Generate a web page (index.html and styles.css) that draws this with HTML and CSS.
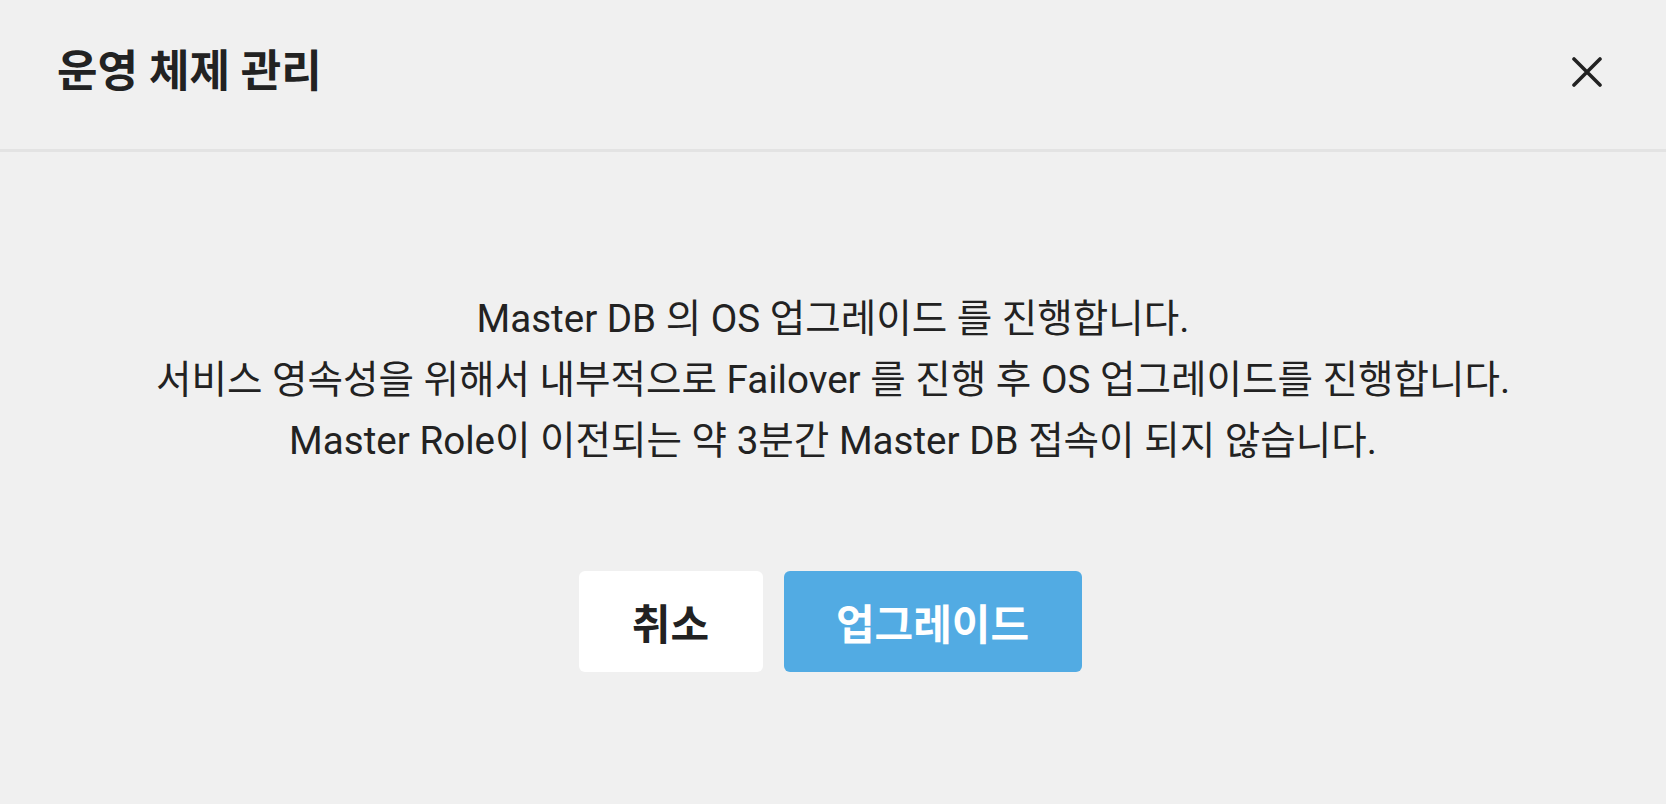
FILE: index.html
```html
<!DOCTYPE html>
<html lang="ko">
<head>
<meta charset="utf-8">
<title>운영 체제 관리</title>
<link rel="stylesheet" href="styles.css">
</head>
<body>
<div class="dialog">
  <header class="dialog-header">
    <h1 class="dialog-title">운영 체제 관리</h1>
    <button class="close-btn" type="button" aria-label="닫기">
      <svg width="30" height="30" viewBox="0 0 30 30"><path d="M2 2 L28 28 M28 2 L2 28" stroke="#222" stroke-width="3.6" stroke-linecap="round"/></svg>
    </button>
  </header>
  <main class="dialog-body">
    <p class="message">
      Master DB 의 OS 업그레이드 를 진행합니다.<br>
      서비스 영속성을 위해서 내부적으로 Failover 를 진행 후 OS 업그레이드를 진행합니다.<br>
      Master Role이 이전되는 약 3분간 Master DB 접속이 되지 않습니다.
    </p>
    <div class="actions">
      <button class="btn btn-cancel" type="button">취소</button>
      <button class="btn btn-primary" type="button">업그레이드</button>
    </div>
  </main>
</div>
</body>
</html>
```
FILE: styles.css
```css
html, body {
  margin: 0;
  padding: 0;
  background: #f0f0f0;
}

body {
  font-family: "Roboto", "Noto Sans CJK KR", sans-serif;
  color: #222;
}

.dialog {
  width: 1666px;
  height: 804px;
  display: flex;
  flex-direction: column;
}

.dialog-header {
  height: 149px;
  border-bottom: 3px solid #e3e3e3;
  display: flex;
  align-items: center;
  justify-content: space-between;
  padding: 0 64px 0 57px;
  box-sizing: content-box;
}

.dialog-title {
  margin: 0 0 14px;
  font-size: 44px;
  font-weight: 700;
  color: #222;
}

.close-btn {
  border: 0;
  background: none;
  padding: 0;
  width: 30px;
  height: 30px;
  margin-bottom: 5px;
  display: flex;
}

.dialog-body {
  display: flex;
  flex-direction: column;
  align-items: center;
  padding-top: 136px;
}

.message {
  margin: 0;
  font-size: 38.6px;
  line-height: 61px;
  text-align: center;
  color: #222;
}

.actions {
  display: flex;
  gap: 21px;
  margin: 100px 6px 0 0;
}

.btn {
  height: 101px;
  border: 0;
  border-radius: 6px;
  font-family: "Roboto", "Noto Sans CJK KR", sans-serif;
  font-size: 42px;
  font-weight: 700;
  padding: 0;
}

.btn-cancel {
  width: 184px;
  background: #fff;
  color: #222;
}

.btn-primary {
  width: 298px;
  background: #52abe3;
  color: #fff;
}
```
